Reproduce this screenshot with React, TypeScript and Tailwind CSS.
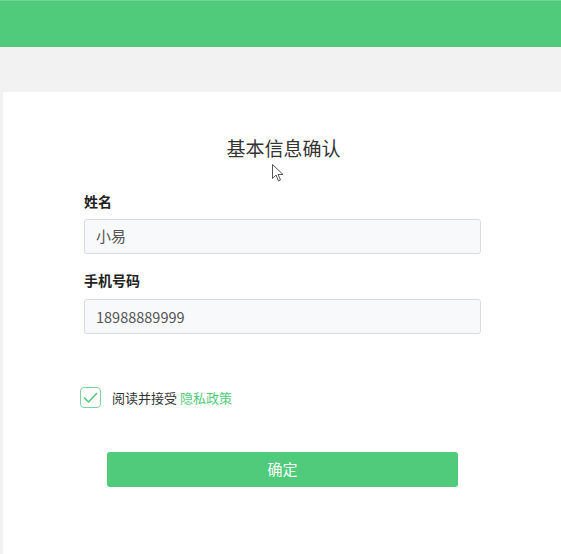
import React from "react";

export default function App() {
  return (
    <div className="relative w-[561px] h-[554px] overflow-hidden bg-[#f2f2f2] font-['Noto_Sans_CJK_SC','Noto_Sans',sans-serif]">
      <div className="h-[47px] bg-[#50ca7b] border-t border-[#6fd692]" />
      <div className="h-[45px] bg-[#f2f2f2]" />
      <div className="ml-[3px] h-[462px] bg-white flex flex-col">
        <h1 className="mt-[41px] h-[30px] text-center text-[19px] leading-[30px] text-[#333] pl-[3px]">基本信息确认</h1>
        <div className="ml-[81px] w-[397px] mt-[29px] flex flex-col">
          <label className="text-[14px] leading-[18px] font-bold text-[#222]">姓名</label>
          <div className="mt-[9px] h-[35px] rounded-[3px] border border-[#d9dcdf] bg-[#f8f9fa] flex items-center px-[11px] text-[15px] text-[#555]">小易</div>
          <label className="mt-[17px] text-[14px] leading-[18px] font-bold text-[#222]">手机号码</label>
          <div className="mt-[10px] h-[35px] rounded-[3px] border border-[#d9dcdf] bg-[#f8f9fa] flex items-center px-[11px] text-[14.5px] text-[#555]">18988889999</div>
        </div>
        <div className="ml-[77px] mt-[53px] flex items-center gap-[11px]">
          <div className="w-[21px] h-[21px] rounded-[4px] border border-[#7fd3a0] flex items-center justify-center">
            <svg width="15" height="12" viewBox="0 0 15 12" fill="none">
              <path d="M1.5 6 L5.5 10 L13.5 1.5" stroke="#50ca7b" strokeWidth="1.6" strokeLinecap="round" strokeLinejoin="round" />
            </svg>
          </div>
          <span className="text-[13px] text-[#333]">
            阅读并接受 <span className="text-[#50ca7b]">隐私政策</span>
          </span>
        </div>
        <button className="ml-[104px] mt-[44px] w-[351px] h-[35px] rounded-[3px] bg-[#50ca7b] text-white text-[15px]">确定</button>
      </div>
      <svg className="absolute left-[272px] top-[164px]" width="14" height="19" viewBox="0 0 14 19">
        <path d="M0.5 0.5 L0.5 14.5 L4 11 L6.5 17 L8.5 16 L6 10.5 L11 10.5 Z" fill="white" stroke="#555" strokeWidth="1" strokeLinejoin="round" />
      </svg>
    </div>
  );
}
